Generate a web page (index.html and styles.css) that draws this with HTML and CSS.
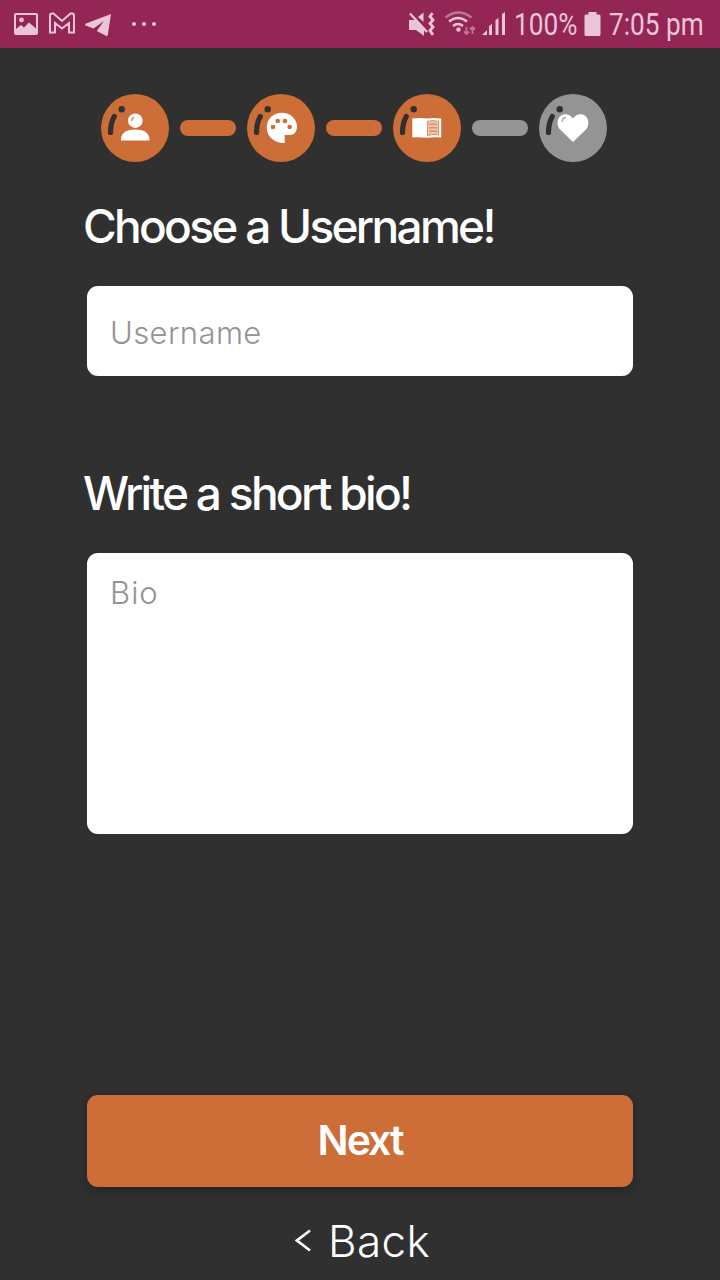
FILE: index.html
```html
<!DOCTYPE html>
<html lang="en">
<head>
    <meta charset="UTF-8">
    <title>Sign up</title>
    <link rel="stylesheet" href="styles.css">
</head>
<body>
<div class="status-bar">
    <svg class="status-left" width="180" height="48" viewBox="0 0 180 48">
        <path fill-rule="evenodd" d="M16 13h20a2 2 0 0 1 2 2v18a2 2 0 0 1-2 2H16a2 2 0 0 1-2-2V15a2 2 0 0 1 2-2zM16 15v14l5-4 3 2.500 5-5 7 6V15zM21.500 17.500a2.400 2.400 0 1 0 0 4.800 2.400 2.400 0 0 0 0-4.800z"/>
        <path class="line gmail" d="M50 32.500V15.500q0-2 2-2h1.500L62 21l8.500-7.500H72q2 0 2 2v17h-5V23l-7 5.500-7-5.500v9.500z"/>
        <path d="M86 23.500L111 14l-3.200 21q-.3 1.300-1.500 1l-9.500-5L104 21l-10.500 7.500-8-3q-1.200-1 .5-2z"/>
        <circle cx="134" cy="24" r="2"/>
        <circle cx="144" cy="24" r="2"/>
        <circle cx="154" cy="24" r="2"/>
    </svg>
    <svg class="status-right" width="108" height="48" viewBox="400 0 108 48">
        <path d="M409 20h6l9 9v7l-8-6h-7zM418 17l5.500-4.500V22z"/>
        <path class="line" d="M410 13.500l17 18.500"/>
        <path class="line wave" d="M432.500 13l-2.500 3.500 3 3.500-3 3.500 3 3.500-3 3.500 3 4.500"/>
        <path class="line dim" d="M445.500 17.500q13-10 26 0"/>
        <path class="line" d="M449 21.500q9-7 18 0M453 26q5-4 10 0"/>
        <circle cx="458.500" cy="29.500" r="2.200"/>
        <path class="line dim arrows" d="M466.500 27v7m-2.500-2.500l2.500 2.500 2.500-2.500M472.500 34v-7m-2.500 2.500l2.500-2.500 2.500 2.500"/>
        <path d="M482 35l5-5v5zM489 26l3-2v11h-3zM495.500 20l3-2v17h-3zM502 14l3-2v23h-3z"/>
    </svg>
    <span class="battery-text"><span class="narrow">100%</span></span>
    <svg class="battery" width="17" height="24" viewBox="0 0 17 24">
        <path d="M4.500 0h8v2.500H15q1.500 0 1.500 1.500v18.500Q16.500 24 15 24H2Q.5 24 .5 22.500V4Q.5 2.500 2 2.500h2.500z"/>
    </svg>
    <span class="time"><span class="narrow">7:05 pm</span></span>
</div>

<div class="steps">
    <svg class="step" viewBox="0 0 68 68">
        <circle class="ball" cx="34" cy="34" r="34"/>
        <path class="shine" d="M13.300 22.500Q9.500 29 9.500 38.500"/>
        <circle class="dot" cx="20.700" cy="15.300" r="3.200"/>
        <circle class="icon" cx="34.300" cy="26.700" r="7.300"/>
        <path class="icon" d="M20 46.500v-3q2-8 14.200-8t14.200 8v3z"/>
        <path class="glint" d="M30.800 27q0-3 2.500-3.500"/>
    </svg>
    <div class="bar"></div>
    <svg class="step" viewBox="0 0 68 68">
        <circle class="ball" cx="34" cy="34" r="34"/>
        <path class="shine" d="M13.300 22.500Q9.500 29 9.500 38.500"/>
        <circle class="dot" cx="20.700" cy="15.300" r="3.200"/>
        <path class="icon" d="M37.700 49C27 49 19.800 43 19.800 33.500S27 18.800 35 18.800s15 6 15 13.500c0 5.500-3 8.700-6.500 8.700h-5.800z"/>
        <circle class="hole" cx="26" cy="33" r="2.300"/>
        <circle class="hole" cx="30.700" cy="27" r="2.300"/>
        <circle class="hole" cx="38" cy="27" r="2.300"/>
        <circle class="hole" cx="42.700" cy="33" r="2.300"/>
    </svg>
    <div class="bar"></div>
    <svg class="step" viewBox="0 0 68 68">
        <circle class="ball" cx="34" cy="34" r="34"/>
        <path class="shine" d="M13.300 22.500Q9.500 29 9.500 38.500"/>
        <circle class="dot" cx="20.700" cy="15.300" r="3.200"/>
        <path class="icon" d="M19.300 24.500q7-1 14.400 0 7-1 14.500 0v19q-7-.5-14.500.3-7-.8-14.400-.3z"/>
        <path class="page" d="M34.500 27.300q5.500-1.500 11 0v13.500q-5.500-1-11 .7z"/>
        <path class="glint" d="M36 30.500q4-1 8 0M36 34q4-1 8 0M36 37.500q4-1 8 0"/>
    </svg>
    <div class="bar off"></div>
    <svg class="step off" viewBox="0 0 68 68">
        <circle class="ball" cx="34" cy="34" r="34"/>
        <path class="shine" d="M13.300 22.500Q9.500 29 9.500 38.500"/>
        <circle class="dot" cx="20.700" cy="15.300" r="3.200"/>
        <path class="icon" d="M34 48L21 35.500c-3.500-4-3-10.500.5-13.500 3.500-3 9.500-2 12.500 2.500 3-4.500 9-5.500 12.500-2.500s4 9.500.5 13.500z"/>
        <path class="glint" d="M23 28q0-4 4-4.500"/>
    </svg>
</div>

<form class="form">
    <label class="title" for="username">Choose a Username!</label>
    <input class="field" id="username" type="text" placeholder="Username">
    <label class="title title-bio" for="bio">Write a short bio!</label>
    <textarea class="field bio" id="bio" placeholder="Bio"></textarea>
    <button class="next" type="button">Next</button>
    <a class="back">
        <svg width="16" height="24" viewBox="0 0 16 24"><path d="M15 1.500L2 11.500l13 10"/></svg>
        <span>Back</span>
    </a>
</form>
</body>
</html>
```
FILE: styles.css
```css
* {
    box-sizing: border-box;
}

body {
    margin: 0;
    height: 1280px;
    overflow: hidden;
    background: #303030;
    color: #fff;
    font-family: Inter, "Liberation Sans", sans-serif;
}

/* status bar */
.status-bar {
    display: flex;
    align-items: center;
    height: 48px;
    background: #932655;
    color: #eac5da;
    font: 400 31px/48px Roboto, sans-serif;
}

.status-bar svg {
    fill: #eac5da;
    flex: none;
}

.status-bar .line {
    fill: none;
    stroke: #eac5da;
    stroke-width: 2.4;
}

.status-bar .gmail {
    stroke-width: 2;
}

.status-bar .wave {
    stroke-width: 2.8;
}

.status-bar .dim {
    opacity: .5;
}

.status-bar .arrows {
    stroke-width: 1.8;
}

.status-right {
    margin-left: 220px;
}

.battery-text {
    width: 62px;
    margin-left: 6px;
    padding-top: 2px;
}

.battery {
    margin-left: 8px;
}

.time {
    width: 94px;
    margin-left: 8px;
    padding-top: 2px;
}

.narrow {
    display: inline-block;
    white-space: nowrap;
    transform: scaleX(.845);
    transform-origin: left;
}

/* steps */
.steps {
    display: flex;
    align-items: center;
    justify-content: space-between;
    width: 506px;
    margin: 46px 0 0 101px;
}

.step {
    width: 68px;
    height: 68px;
}

.bar {
    width: 56px;
    height: 16px;
    border-radius: 8px;
    background: #cd6d37;
}

.ball, .hole {
    fill: #cd6d37;
}

.shine {
    fill: none;
    stroke: #303030;
    stroke-width: 5.2;
    stroke-linecap: round;
}

.dot {
    fill: #303030;
}

.icon {
    fill: #fff;
}

.page {
    fill: #edc5af;
    stroke: #dc9168;
    stroke-width: 1;
}

.glint {
    fill: none;
    stroke: #dc9168;
    stroke-width: 1.4;
}

.bar.off {
    background: #949494;
}

.off .ball {
    fill: #949494;
}

.off .glint {
    stroke: #aaa;
}

/* form */
.form {
    display: flex;
    flex-direction: column;
    width: 546px;
    margin: 34px 0 0 87px;
}

.title {
    height: 60px;
    margin-left: -4px;
    font-size: 46px;
    font-weight: 550;
    line-height: 60px;
    letter-spacing: -2.7px;
    white-space: nowrap;
}

.title-bio {
    margin-top: 87px;
}

.field {
    width: 546px;
    height: 90px;
    margin: 30px 0 0;
    padding: 3px 23px 0;
    border: 0;
    border-radius: 11px;
    background: #fff;
    font: 300 31px/40px Inter, sans-serif;
    letter-spacing: .4px;
    resize: none;
}

.field::placeholder {
    color: #949494;
    opacity: 1;
}

.bio {
    height: 281px;
    padding-top: 20px;
    letter-spacing: 1px;
}

.next {
    height: 92px;
    margin: 261px 0 0;
    padding: 0 0 2px;
    border: 0;
    border-radius: 11px;
    background: #cd6d37;
    box-shadow: 0 3px 14px rgba(0, 0, 0, .3);
    color: #fff;
    font: 600 41px Inter, sans-serif;
    letter-spacing: -2px;
}

.back {
    display: flex;
    align-items: center;
    gap: 17px;
    margin: 27px 0 0 208px;
    font-size: 44px;
    font-weight: 300;
    line-height: 54px;
    letter-spacing: .4px;
}

.back svg {
    fill: none;
    stroke: #fff;
    stroke-width: 2.7;
}
```
